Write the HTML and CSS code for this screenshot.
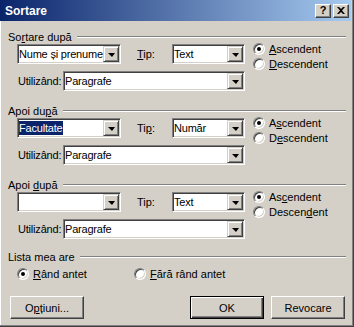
FILE: index.html
```html
<!DOCTYPE html>
<html lang="ro">
<head>
  <meta charset="UTF-8" />
  <title>Sortare</title>
  <link rel="stylesheet" href="styles.css">
</head>
<body>
  <div class="window">
    <div class="titlebar">
      <span class="title">Sortare</span>
      <span class="tb-btn help">?</span>
      <span class="tb-btn close">
        <svg width="8" height="7" viewBox="0 0 8 7"><path d="M0 0h2l2 2 2-2h2L5 3.5 8 7H6L4 5 2 7H0l3-3.5z" fill="#000"/></svg>
      </span>
    </div>

    <div class="content">
      <section class="group">
        <div class="group-head"><span>So<u>r</u>tare după</span></div>
        <div class="group-body">
          <div class="fields">
            <div class="row">
              <div class="combo key"><span class="value">Nume și prenume</span><span class="drop"></span></div>
              <span class="tip"><u>T</u>ip:</span>
              <div class="combo type"><span class="value">Text</span><span class="drop"></span></div>
            </div>
            <div class="row">
              <span class="using">Utilizând:</span>
              <div class="combo wide"><span class="value">Paragrafe</span><span class="drop"></span></div>
            </div>
          </div>
          <div class="order">
            <div class="radio-row"><span class="radio checked"></span><span><u>A</u>scendent</span></div>
            <div class="radio-row"><span class="radio"></span><span><u>D</u>escendent</span></div>
          </div>
        </div>
      </section>

      <section class="group">
        <div class="group-head"><span>Apoi du<u>p</u>ă</span></div>
        <div class="group-body">
          <div class="fields">
            <div class="row">
              <div class="combo key"><span class="value"><span class="selected">Facultate</span></span><span class="drop"></span></div>
              <span class="tip">Ti<u>p</u>:</span>
              <div class="combo type"><span class="value">Număr</span><span class="drop"></span></div>
            </div>
            <div class="row">
              <span class="using">Utilizând:</span>
              <div class="combo wide"><span class="value">Paragrafe</span><span class="drop"></span></div>
            </div>
          </div>
          <div class="order">
            <div class="radio-row"><span class="radio checked"></span><span>A<u>s</u>cendent</span></div>
            <div class="radio-row"><span class="radio"></span><span>D<u>e</u>scendent</span></div>
          </div>
        </div>
      </section>

      <section class="group last">
        <div class="group-head"><span>Apoi <u>d</u>upă</span></div>
        <div class="group-body">
          <div class="fields">
            <div class="row">
              <div class="combo key"><span class="value"></span><span class="drop"></span></div>
              <span class="tip">Tip:</span>
              <div class="combo type"><span class="value">Text</span><span class="drop"></span></div>
            </div>
            <div class="row">
              <span class="using">Utilizând:</span>
              <div class="combo wide"><span class="value">Paragrafe</span><span class="drop"></span></div>
            </div>
          </div>
          <div class="order">
            <div class="radio-row"><span class="radio checked"></span><span>As<u>c</u>endent</span></div>
            <div class="radio-row"><span class="radio"></span><span>Descen<u>d</u>ent</span></div>
          </div>
        </div>
      </section>

      <section class="group">
        <div class="group-head"><span>Lista mea are</span></div>
        <div class="list-body">
          <div class="radio-row header-yes"><span class="radio checked"></span><span><u>R</u>ând antet</span></div>
          <div class="radio-row"><span class="radio"></span><span><u>F</u>ără rând antet</span></div>
        </div>
      </section>

      <div class="actions">
        <button class="btn">O<u>p</u>țiuni...</button>
        <button class="btn default">OK</button>
        <button class="btn cancel">Revocare</button>
      </div>
    </div>
  </div>
</body>
</html>
```

FILE: styles.css
```css
:root {
  --face: #d4d0c8;
  --shadow: #808080;
  --dark: #404040;
  --light: #ffffff;
  --select: #0a246a;
}

body {
  margin: 0;
  font-family: 'Liberation Sans', Arial, sans-serif;
  font-size: 11px;
  color: #000;
  background: var(--face);
}

u {
  text-decoration: underline;
  text-underline-offset: 1px;
}

.window {
  width: 354px;
  height: 327px;
  box-sizing: border-box;
  background: var(--face);
  border-right: 1px solid var(--dark);
  border-bottom: 1px solid var(--dark);
  box-shadow: inset -1px -1px var(--shadow), inset 1px 0 var(--light);
}

/* title bar */
.titlebar {
  height: 21px;
  margin-right: 2px;
  padding: 0 2px 0 5px;
  background: linear-gradient(to right, #0a246a, #a6caf0);
  display: flex;
  align-items: center;
}

.title {
  flex: 1;
  color: #fff;
  font-weight: bold;
  font-size: 12px;
}

.tb-btn {
  width: 16px;
  height: 14px;
  box-sizing: border-box;
  background: var(--face);
  border: 1px solid;
  border-color: var(--light) var(--dark) var(--dark) var(--light);
  box-shadow: inset -1px -1px var(--shadow);
  display: flex;
  align-items: center;
  justify-content: center;
  font-weight: bold;
  font-size: 11px;
  line-height: 1;
}

.tb-btn.close {
  margin-left: 2px;
}

/* groups */
.content {
  padding-top: 9px;
}

.group {
  margin-bottom: 13px;
}

.group.last {
  margin-bottom: 11px;
}

.group-head {
  width: 346px;
  height: 13px;
  box-sizing: border-box;
  padding-left: 8px;
  display: flex;
  align-items: center;
  white-space: nowrap;
}

.group-head::after {
  content: "";
  flex: 1;
  height: 0;
  margin-left: 5px;
  border-top: 1px solid var(--shadow);
  border-bottom: 1px solid var(--light);
}

.group-body {
  display: flex;
  padding-left: 17px;
  margin-top: 1px;
}

.fields {
  width: 228px;
  display: flex;
  flex-direction: column;
  gap: 7px;
}

.row {
  height: 20px;
  display: flex;
  align-items: center;
}

.tip {
  width: 35px;
  margin-left: 16px;
}

.using {
  width: 45px;
  padding-left: 1px;
  letter-spacing: -0.2px;
}

/* combo boxes */
.combo {
  height: 20px;
  box-sizing: border-box;
  background: #fff;
  border: 1px solid;
  border-color: var(--shadow) var(--light) var(--light) var(--shadow);
  box-shadow: inset 1px 1px var(--dark), inset -1px -1px var(--face);
  padding: 1px 1px 1px 1px;
  display: flex;
  align-items: center;
}

.combo.key { width: 104px; }
.combo.type { width: 73px; }
.combo.wide { width: 182px; }

.value {
  flex: 1;
  line-height: 16px;
  white-space: nowrap;
  overflow: hidden;
  letter-spacing: -0.2px;
}

.selected {
  background: var(--select);
  color: #fff;
  padding: 1px 1px 1px 0;
}

.drop {
  width: 16px;
  height: 16px;
  box-sizing: border-box;
  background: var(--face);
  border: 1px solid;
  border-color: var(--face) var(--dark) var(--dark) var(--face);
  box-shadow: inset 1px 1px var(--light), inset -1px -1px var(--shadow);
  display: flex;
  align-items: center;
  justify-content: center;
}

.drop::before {
  content: "";
  border-left: 4px solid transparent;
  border-right: 3px solid transparent;
  border-top: 4px solid #000;
  margin-top: 1px;
}

/* radios */
.order {
  margin-left: 8px;
  margin-top: -3px;
}

.radio-row {
  height: 15px;
  display: flex;
  align-items: center;
  white-space: nowrap;
}

.radio {
  width: 12px;
  height: 12px;
  box-sizing: border-box;
  margin-right: 4px;
  border-radius: 50%;
  border: 1px solid;
  border-color: var(--shadow) var(--light) var(--light) var(--shadow);
  background: #fff;
  box-shadow: inset 1px 1px var(--dark), inset -1px -1px var(--face);
  display: flex;
  align-items: center;
  justify-content: center;
}

.radio.checked::after {
  content: "";
  width: 4px;
  height: 4px;
  border-radius: 50%;
  background: #000;
}

.list-body {
  display: flex;
  padding-left: 17px;
  margin-top: 3px;
}

.header-yes {
  width: 117px;
}

/* buttons */
.actions {
  display: flex;
  padding-left: 10px;
  margin-top: 15px;
}

.btn {
  width: 74px;
  height: 23px;
  box-sizing: border-box;
  padding: 0;
  font-family: inherit;
  font-size: 11px;
  color: #000;
  background: var(--face);
  border: 1px solid;
  border-color: var(--light) var(--dark) var(--dark) var(--light);
  box-shadow: inset -1px -1px var(--shadow);
}

.btn.default {
  margin-left: 106px;
  border-color: #000;
  box-shadow: inset 1px 1px var(--light), inset -1px -1px var(--dark), inset -2px -2px var(--shadow);
}

.btn.cancel {
  margin-left: 7px;
}
```
